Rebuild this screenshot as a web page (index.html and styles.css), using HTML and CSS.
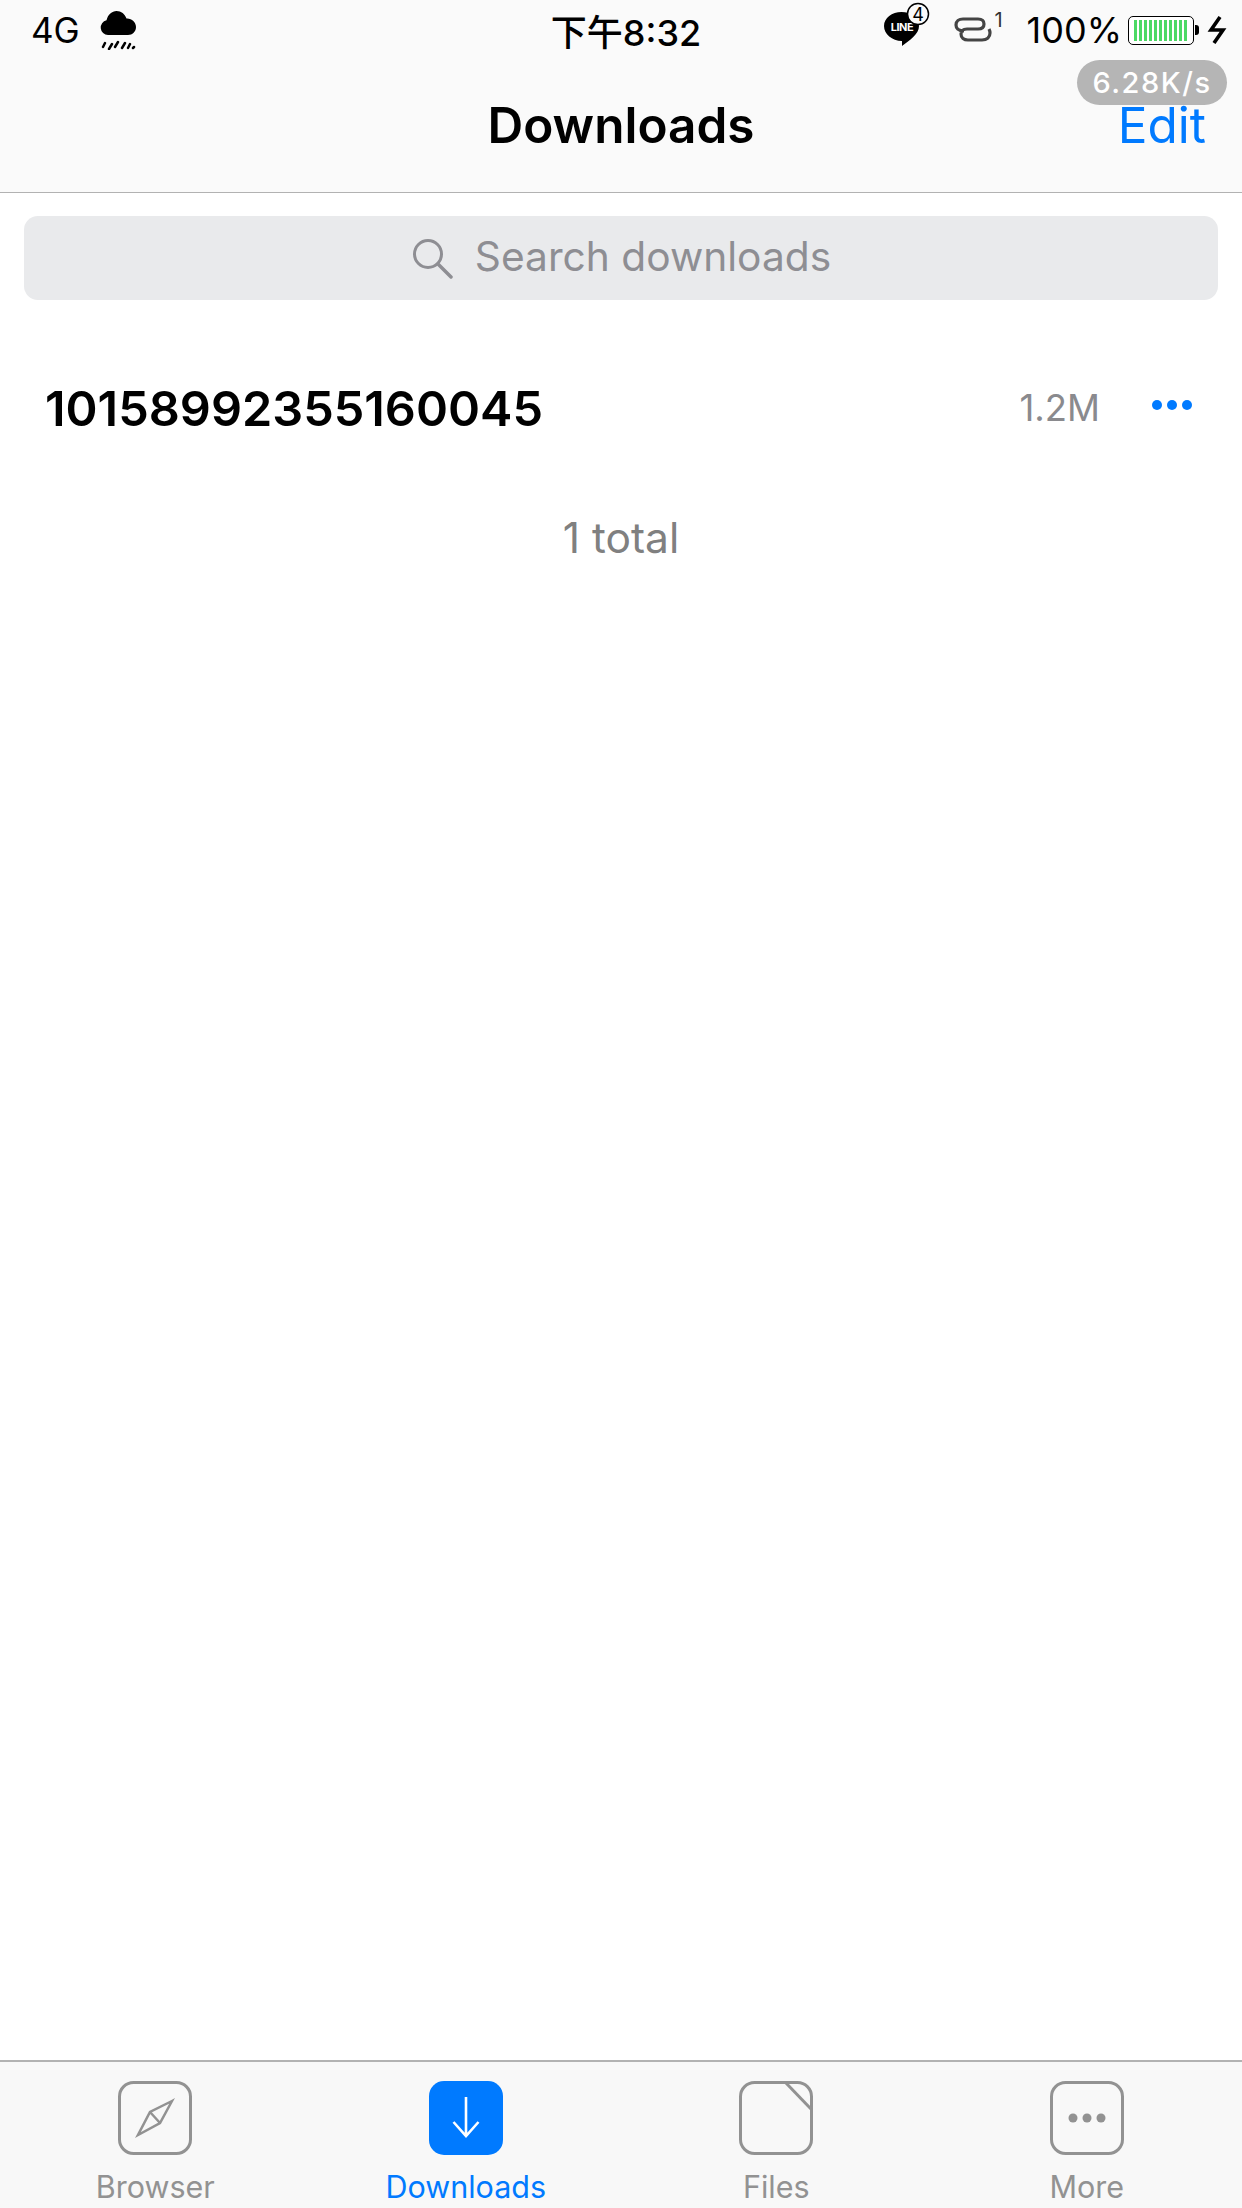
FILE: index.html
```html
<!DOCTYPE html>
<html lang="en">
<head>
  <meta charset="UTF-8">
  <title>Downloads</title>
  <link rel="stylesheet" href="styles.css">
</head>
<body>
  <div class="app">
    <header class="topbar">
      <div class="status">
        <div class="status-left">
          <span class="carrier">4G</span>
          <svg class="weather" viewBox="0 0 38 40" width="38" height="40">
            <path d="M9 25a7.500 7.500 0 0 1-1.500-14.800C9 4.500 13 1 17.500 1c4.700 0 8.500 3 10 7.600 5-.4 9.500 3.500 9.500 8.400 0 4.600-3.600 8-8 8z" fill="#000"/>
            <path d="M4 37l2-4M10 39l3-5M16 37l3-5M23 38l3-5M29 38l2-4M34 38l1-1" stroke="#000" stroke-width="2.500" stroke-linecap="round" fill="none"/>
          </svg>
        </div>
        <div class="status-time">下午8:32</div>
        <div class="status-right">
          <svg class="line-icon" viewBox="0 0 46 48" width="46" height="48">
            <path d="M17.500 13C27 13 35 19 35 27 35 35 26 41 18 47L18 42C8 42 0 35 0 27 0 19 8 13 17.500 13z" fill="#000"/>
            <text class="line-word" x="18" y="32" text-anchor="middle">LINE</text>
            <circle cx="34" cy="15" r="10.500" fill="#fafafa" stroke="#000" stroke-width="1.500"/>
            <text class="line-badge" x="34" y="21.500" text-anchor="middle">4</text>
          </svg>
          <span class="link-group">
            <svg viewBox="0 0 38 26" width="38" height="26">
              <path d="M10 14C4 14 2 11 2 8 2 4 5 2 9 2H24C28 2 30 4 30 7 30 10 28 12 24 12H13C9 12 7 14 7 17 7 21 10 23 14 23H28C33 23 36 20 36 16 36 14 35.500 13 35 12" fill="none" stroke="#444" stroke-width="3.200"/>
            </svg>
            <span class="link-count">1</span>
          </span>
          <span class="percent">100%</span>
          <div class="battery"><div class="battery-fill"></div></div>
          <div class="battery-tip"></div>
          <svg class="bolt" viewBox="0 0 20 28" width="20" height="28">
            <path d="M13 1L4 14h12L7 27" fill="none" stroke="#000" stroke-width="3.600"/>
          </svg>
        </div>
      </div>
      <div class="nav">
        <h1 class="nav-title">Downloads</h1>
        <span class="nav-edit">Edit</span>
      </div>
      <div class="speed">6.28K/s</div>
    </header>

    <main class="content">
      <div class="search">
        <svg viewBox="0 0 42 42" width="42" height="42">
          <circle cx="17" cy="17" r="13.500" fill="none" stroke="#8e8e93" stroke-width="3"/>
          <path d="M27 27l13 13" stroke="#8e8e93" stroke-width="3.500" stroke-linecap="round"/>
        </svg>
        <span class="search-text">Search downloads</span>
      </div>
      <div class="row">
        <span class="row-name">10158992355160045</span>
        <span class="row-size">1.2M</span>
        <div class="row-more"><i></i><i></i><i></i></div>
      </div>
      <div class="total">1 total</div>
    </main>

    <nav class="tabs">
      <div class="tab">
        <svg viewBox="0 0 74 74" width="74" height="74">
          <rect x="1.500" y="1.500" width="71" height="71" rx="14" fill="none" stroke="#929292" stroke-width="3"/>
          <path d="M54 20L32 31 20 54 42 42zM32 31l10 11" fill="none" stroke="#929292" stroke-width="2.500"/>
        </svg>
        <span>Browser</span>
      </div>
      <div class="tab active">
        <svg viewBox="0 0 74 74" width="74" height="74">
          <rect width="74" height="74" rx="15" fill="#007aff"/>
          <path d="M37 16v39M24.500 41L37 55 49.500 41" fill="none" stroke="#fff" stroke-width="2.600"/>
        </svg>
        <span>Downloads</span>
      </div>
      <div class="tab">
        <svg viewBox="0 0 74 74" width="74" height="74">
          <rect x="1.500" y="1.500" width="71" height="71" rx="14" fill="none" stroke="#929292" stroke-width="3"/>
          <path d="M47 2L72 28" fill="none" stroke="#929292" stroke-width="3"/>
        </svg>
        <span>Files</span>
      </div>
      <div class="tab">
        <svg viewBox="0 0 74 74" width="74" height="74">
          <rect x="1.500" y="1.500" width="71" height="71" rx="14" fill="none" stroke="#929292" stroke-width="3"/>
          <circle cx="23" cy="37" r="4.500" fill="#929292"/>
          <circle cx="37" cy="37" r="4.500" fill="#929292"/>
          <circle cx="51" cy="37" r="4.500" fill="#929292"/>
        </svg>
        <span>More</span>
      </div>
    </nav>
  </div>
</body>
</html>
```

FILE: styles.css
```css
* {
  box-sizing: border-box;
}

body {
  margin: 0;
  font-family: Inter, "Noto Sans CJK SC", sans-serif;
  background: #fff;
  color: #000;
}

.app {
  display: flex;
  flex-direction: column;
  height: 2208px;
  width: 1242px;
  overflow: hidden;
}

.topbar {
  position: relative;
  height: 193px;
  background: #fafafa;
  border-bottom: 1px solid #b2b2b2;
  flex: none;
}

.status {
  display: flex;
  align-items: center;
  justify-content: space-between;
  height: 62px;
  padding: 0 15px 2px 31px;
}

.status-left,
.status-right {
  display: flex;
  align-items: center;
  flex: 1;
}

.status-right {
  justify-content: flex-end;
}

.carrier {
  font-size: 35px;
}

.weather {
  margin-left: 19px;
}

.status-time {
  font-size: 36px;
  font-weight: 500;
  margin-right: 6px;
}

.line-icon {
  margin-bottom: 14px;
}

.line-word {
  font-size: 11px;
  font-weight: 700;
  fill: #fff;
  letter-spacing: -0.5px;
}

.line-badge {
  font-size: 18px;
  fill: #000;
}

.link-group {
  display: flex;
  align-items: center;
  margin-left: 24px;
}

.link-count {
  font-size: 20px;
  color: #333;
  margin: -20px 0 0 2px;
  line-height: 1;
}

.percent {
  font-size: 36px;
  margin-left: 24px;
}

.battery {
  width: 66px;
  height: 29px;
  margin-left: 6px;
  padding: 3px 5px;
  border: 1.500px solid #000;
  border-radius: 5px;
  background: #fff;
}

.battery-fill {
  height: 100%;
  background: repeating-linear-gradient(90deg, #4cd964 0 3px, #fff 3px 5px);
}

.battery-tip {
  width: 4px;
  height: 10px;
  margin-left: 1px;
  background: #000;
  border-radius: 0 3px 3px 0;
}

.bolt {
  margin-left: 8px;
}

.nav {
  display: flex;
  align-items: center;
  justify-content: center;
  height: 130px;
  position: relative;
  padding-bottom: 4px;
}

.nav-title {
  margin: 0;
  font-size: 49.5px;
  font-weight: 600;
}

.nav-edit {
  position: absolute;
  right: 36px;
  top: 44px;
  font-size: 49.5px;
  line-height: 38px;
  color: #007aff;
}

.speed {
  position: absolute;
  top: 60px;
  right: 15px;
  width: 150px;
  height: 45px;
  border-radius: 23px;
  background: #b5b5b5;
  color: #fff;
  font-size: 29px;
  font-weight: 500;
  letter-spacing: 1.5px;
  line-height: 45px;
  text-align: center;
}

.content {
  flex: 1;
  padding: 23px 24px 0;
}

.search {
  display: flex;
  align-items: center;
  justify-content: center;
  gap: 22px;
  height: 84px;
  background: #e9eaec;
  border-radius: 14px;
  color: #8e8e93;
  font-size: 40.7px;
}

.search-text {
  margin-bottom: 3px;
}

.row {
  display: flex;
  align-items: center;
  height: 108px;
  margin-top: 54px;
  padding: 0 26px 0 21px;
}

.row-name {
  flex: 1;
  font-size: 48.6px;
  font-weight: 600;
}

.row-size {
  font-size: 36.5px;
  color: #8a8a8e;
  margin-right: 52px;
}

.row-more {
  display: flex;
  gap: 5px;
  margin-bottom: 6px;
}

.row-more i {
  width: 10px;
  height: 10px;
  border-radius: 50%;
  background: #007aff;
}

.total {
  margin-top: 50px;
  text-align: center;
  font-size: 42.5px;
  color: #808080;
}

.tabs {
  display: grid;
  grid-template-columns: repeat(4, 1fr);
  flex: none;
  height: 148px;
  background: #f8f8f8;
  border-top: 2px solid #b2b2b2;
  padding-top: 19px;
}

.tab {
  display: flex;
  flex-direction: column;
  align-items: center;
  color: #929292;
  font-size: 30.5px;
}

.tab span {
  margin-top: 13px;
}

.tab.active {
  color: #007aff;
}
```
